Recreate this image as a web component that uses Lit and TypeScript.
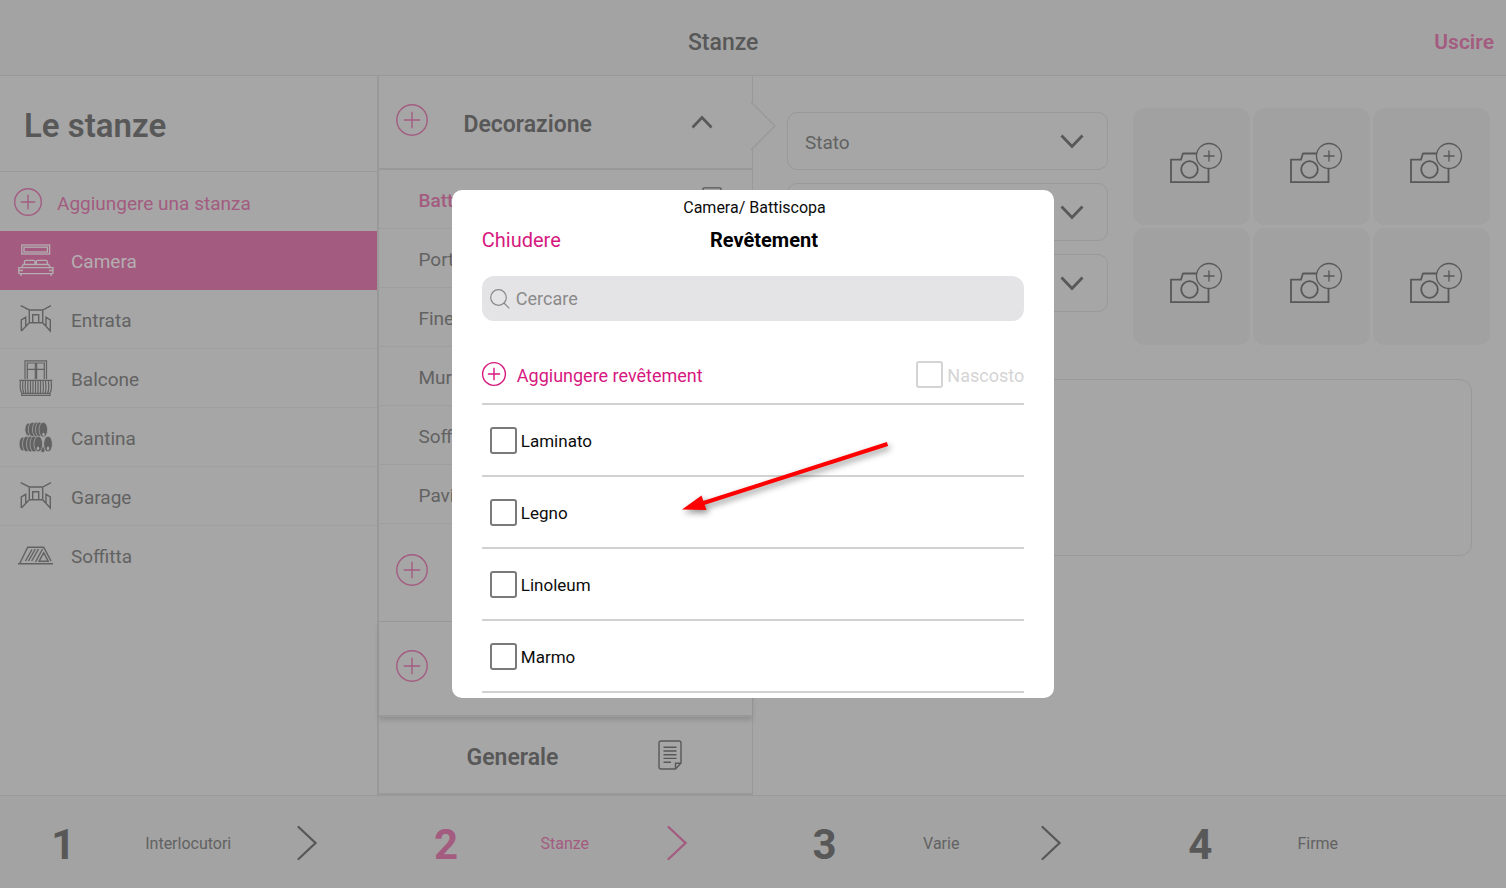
import { LitElement, html, svg, css, nothing, TemplateResult } from "lit";
import { customElement, property } from "lit/decorators.js";
import { classMap } from "lit/directives/class-map.js";

type IconName =
  | "bed" | "hall" | "balcony" | "barrels" | "attic" | "plus" | "up" | "down" | "next"
  | "note" | "camera" | "search" | "pointer" | "arrow";

const hall = svg`<path d="M2.7 4.7 11.3 9H24.7L33 4.7M11.3 9V21.7M24.7 9V21.7M3.3 30 11.3 21.7H24.7L32.3 30V19L28 16.3V25.5M3.3 30V19L7.7 16.3V25.5M14.7 21.7V13.7H20.7V21.7" />`;

const barrel = (x: number, y: number, rx: number, ry: number) =>
  svg`<ellipse class="barrel" cx=${x} cy=${y} rx=${rx} ry=${ry} />`;

const icons: Record<IconName, { w: number; h: number; sw: number; body: TemplateResult<2> }> = {
  bed: {
    w: 36, h: 36, sw: 1.3,
    body: svg`<rect x="3.8" y="3" width="27.8" height="9" /><rect x="6" y="5.2" width="23.4" height="4.8" />
      <path d="M6.500 22.500V19.500Q6.500 18.300 7.700 18.300H15.800Q17 18.300 17 19.500V22.500M18.300 22.500V19.500Q18.300 18.300 19.500 18.300H28Q29.300 18.300 29.300 19.500V22.500M0.800 31.700V25.700H5M35 31.700V25.700H31M0.800 31.700H35M3.500 25.700 5.300 22.500H30.500L32.500 25.700M0.800 28.500H5M35 28.500H31M5 25.700H31M3 31.700V34M33 31.700V34" />`,
  },
  hall: { w: 36, h: 36, sw: 1.4, body: hall },
  balcony: {
    w: 36, h: 36, sw: 1.2,
    body: svg`<path d="M7 19V.8H28.5V19M9.3 19V3H26.3V19M17.3 3V19M18.6 3V19M9.3 9.3H26.3M1.3 20.3H34.3M3.7 33.3H32V35.4H3.7ZM2.5 20.5Q1.5 29 3.7 33M33 20.5Q34.3 29 32 33M5 20.5Q4 29 5.8 33M7.5 20.5Q6.7 29 8 33M10 20.5Q9.5 29 10.3 33M12.5 20.5V33M15 20.5V33M17.5 20.5V33M20 20.5V33M22.5 20.5V33M25 20.5Q25.7 29 25 33M27.5 20.5Q28.5 29 27.3 33M30.3 20.5Q31.5 29 29.7 33" />`,
  },
  barrels: {
    w: 36, h: 36, sw: 0.8,
    body: svg`${barrel(10.5, 10.5, 3.6, 6.5)}${barrel(14.5, 10.5, 4.2, 7.3)}${barrel(18.5, 10.5, 4, 7.5)}${barrel(21.5, 10.5, 4, 7.5)}${barrel(25.3, 10.7, 4.3, 7.5)}
      ${barrel(4.8, 25, 3.7, 7)}${barrel(8.5, 25, 4, 7.8)}${barrel(12.5, 25, 4, 8)}${barrel(16, 25, 4, 8)}${barrel(24.8, 30.5, 2.5, 3)}${barrel(20.3, 25, 4.4, 7.8)}${barrel(30, 25, 4.4, 7.8)}
      <ellipse class="tap" cx="25.500" cy="15.500" rx="1.200" ry="1.700" /><ellipse class="tap" cx="20" cy="29.300" rx="1.200" ry="1.900" /><ellipse class="tap" cx="30" cy="29.300" rx="1.200" ry="1.900" />`,
  },
  attic: {
    w: 36, h: 36, sw: 1.4,
    body: svg`<path d="M0 26.700H35M1.700 26.500 9.700 10.300H25.700L33 24M7.500 24 14 12.500M10.500 24 17.300 12M13.700 24 20.500 12M17.500 25 24.500 12M21 24.300 25.700 15.700 30.300 24.300Z" />`,
  },
  plus: { w: 32, h: 32, sw: 1.4, body: svg`<circle cx="16" cy="16" r="15.200" /><path d="M16 7.800V24.200M7.800 16H24.200" />` },
  up: { w: 22, h: 14, sw: 2.6, body: svg`<path d="M1.500 12.500 11 2.500 20.500 12.500" />` },
  down: { w: 24, h: 15, sw: 2.8, body: svg`<path d="M1.500 1.500 12 12.500 22.500 1.500" />` },
  next: { w: 80, h: 36, sw: 2.3, body: svg`<path stroke-linecap="round" d="M23.500 1 40.500 17 23.500 33" />` },
  note: {
    w: 24, h: 30, sw: 1.4,
    body: svg`<path d="M1 3Q1 1 3 1H21Q23 1 23 3V23L17.500 29H3Q1 29 1 27ZM17.500 29V23.200H23M5.500 7.300H18.500M5.500 11H18.500M5.500 14.700H18.500M5.500 18.400H18.500M5.500 22.200H13" />`,
  },
  camera: {
    w: 52, h: 40, sw: 1.8,
    body: svg`<path d="M38.500 26V39.200H1V16.700H11L12.700 11Q13 10.500 13.500 10.500H27" /><circle cx="19.500" cy="26.500" r="8.300" />
      <g stroke-width="1.300"><circle cx="39" cy="13" r="12.500" /><path d="M39 7.500V18.500M33.500 13H44.500" /></g>`,
  },
  search: { w: 20, h: 20, sw: 1.2, body: svg`<circle cx="8.500" cy="8.500" r="7.800" /><path d="M14 14 19.300 19.300" />` },
  pointer: { w: 25, h: 50, sw: 1.3, body: svg`<path class="face" d="M0 1 24 25 0 49" />` },
  arrow: {
    w: 210, h: 80, sw: 4,
    body: svg`<path d="M205.500 4 20 63.500" /><path class="head" d="M0 69.500 19.500 55.500 24.500 70Z" />`,
  },
};

@customElement("room-icon")
export class RoomIcon extends LitElement {
  @property() name: IconName = "plus";
  @property({ type: Number }) size = 0;

  static styles = css`
    :host { display: inline-flex; flex: none; }
    .glyph { display: block; fill: none; stroke: currentColor; overflow: visible; }
    .barrel { fill: currentColor; stroke: #a6a6a6; }
    .tap { fill: #a6a6a6; stroke: none; }
    .face { fill: #a6a6a6; }
    .head { fill: currentColor; stroke: none; }
  `;

  render() {
    const i = icons[this.name];
    const w = this.size || i.w;
    return html`<svg class="glyph" width=${w} height=${(i.h * w) / i.w} viewBox="0 0 ${i.w} ${i.h}"
      stroke-width=${(i.sw * i.w) / w} aria-hidden="true">${i.body}</svg>`;
  }
}

const rooms: { icon: IconName; label: string; active?: boolean }[] = [
  { icon: "bed", label: "Camera", active: true },
  { icon: "hall", label: "Entrata" },
  { icon: "balcony", label: "Balcone" },
  { icon: "barrels", label: "Cantina" },
  { icon: "hall", label: "Garage" },
  { icon: "attic", label: "Soffitta" },
];
const parts = ["Battiscopa", "Porte", "Finestre", "Muro", "Soffitto", "Pavimento"];
const steps = ["Interlocutori", "Stanze", "Varie", "Firme"];
const coverings = ["Laminato", "Legno", "Linoleum", "Marmo"];

@customElement("app-root")
export class AppRoot extends LitElement {
  static styles = css`
    :host {
      --page: #a6a6a6;
      --bar: #a3a3a3;
      --ink: #585858;
      --soft: #626262;
      --line: #999999;
      --faint: #9f9f9f;
      --rose: #a35c80;
      --accent: #d6187f;
      position: relative;
      display: grid;
      grid-template-rows: 76px 1fr 93px;
      min-height: 100vh;
      background: var(--page);
      color: var(--soft);
      font: 19px/24px Roboto, "Liberation Sans", sans-serif;
    }
    *, *::before { box-sizing: border-box; }
    h1, h2, h3, p, ul { margin: 0; padding: 0; }
    ul { list-style: none; }
    button, input, select, textarea { margin: 0; padding: 0; border: 0; background: none; color: inherit; font: inherit; }
    a { color: inherit; text-decoration: none; }

    .top { display: flex; align-items: center; padding: 8px 12px 0; background: var(--bar); border-bottom: 1px solid var(--line); }
    .top-title { flex: 1; padding-top: 2px; text-align: center; font-size: 23px; font-weight: 500; color: var(--ink); }
    .exit { font-size: 21px; font-weight: 600; color: var(--rose); }

    .main { display: grid; grid-template-columns: 1fr 1fr 2fr; }
    .rooms-title { display: flex; align-items: center; height: 96px; padding: 4px 24px 0; border-bottom: 1px solid var(--line); font-size: 33px; font-weight: 600; line-height: 40px; color: var(--ink); }
    .label { padding-top: 4px; }
    .add-room { display: flex; align-items: center; gap: 15px; height: 59px; padding-left: 14px; color: var(--rose); }
    .room { display: flex; align-items: center; gap: 17px; width: 100%; height: 59px; padding-left: 18px; border-bottom: 1px solid var(--faint); text-align: left; }
    .room.active { background: var(--rose); border-color: var(--rose); color: #b4aeb1; }
    li:last-child .room { border-color: transparent; }

    .parts { display: flex; flex-direction: column; border-left: 2px solid var(--line); border-right: 1px solid var(--line); }
    .group { position: relative; display: grid; grid-template-columns: 32px 1fr 22px; align-items: center; gap: 36px; height: 94px; padding: 0 39px 0 17px; border-bottom: 2px solid var(--line); }
    .group-title { padding-top: 5px; font-size: 23px; font-weight: 600; color: var(--ink); }
    .plus { display: flex; padding-bottom: 5px; color: var(--rose); }
    .pointer { position: absolute; top: 25px; right: -24px; color: var(--line); }
    .part { display: flex; align-items: center; justify-content: space-between; width: 100%; height: 59px; padding: 0 30px 0 40px; border-bottom: 1px solid var(--faint); text-align: left; }
    .part.active { font-weight: 500; color: var(--rose); }
    .ink { color: var(--ink); }
    .closed { height: 98px; border-bottom-width: 1px; }
    .closed.last { height: 95px; border-bottom-width: 2px; box-shadow: 0 3px 5px #8f8f8f; }
    .general { display: flex; align-items: center; justify-content: space-between; flex: 1; padding: 0 70px 0 88px; border-bottom: 2px solid var(--line); color: var(--ink); }

    .detail { display: grid; grid-template-columns: 1fr 357px; align-content: start; column-gap: 25px; padding: 32px 16px 0 34px; }
    .choices { display: grid; gap: 13px; padding-top: 4px; align-content: start; }
    .choice { display: grid; align-items: center; }
    .choice > * { grid-area: 1 / 1; }
    .chevron { justify-self: end; margin-right: 24px; pointer-events: none; color: var(--ink); }
    .select { appearance: none; width: 100%; height: 58px; padding: 3px 17px 0; border: 1px solid var(--line); border-radius: 10px; }
    .photos { display: grid; grid-template-columns: repeat(3, 1fr); gap: 3px; }
    .photo { display: grid; place-items: center; aspect-ratio: 1; padding: 0 0 8px 8px; border-radius: 12px; background: #a1a1a1; color: var(--ink); }
    .notes { grid-column: 1 / -1; resize: none; height: 177px; margin: 34px 18px 0 0; padding: 16px; border: 1px solid var(--line); border-radius: 12px; }

    .steps { display: grid; grid-template-columns: repeat(4, 1fr); background: var(--bar); border-top: 1px solid var(--line); }
    .step { display: flex; align-items: center; justify-content: space-around; padding-top: 4px; font-size: 16px; }
    .step.active, .step.active .num { color: var(--rose); }
    .num { width: 80px; padding: 2px 0 0 3px; text-align: center; font-size: 42px; font-weight: 700; line-height: 48px; color: var(--ink); }
    .step-next { display: flex; width: 80px; color: var(--ink); }
    .step.active .step-next { color: var(--rose); }

    .layer { position: absolute; inset: 0; display: grid; place-items: center; }
    .dialog { position: relative; width: 40%; min-width: 480px; padding: 6px 30px 5px; border-radius: 10px; background: #fff; color: #0c0c0c; }
    .crumb { padding-left: 3px; text-align: center; font-size: 16px; }
    .dialog-head { display: grid; grid-template-columns: 1fr auto 1fr; align-items: center; padding: 8px 0 24px; }
    .close { justify-self: start; font-size: 20px; color: var(--accent); }
    .dialog-title { padding-left: 22px; font-size: 20px; font-weight: 700; color: #000; }
    .search { display: flex; align-items: center; gap: 6px; height: 45px; padding: 0 8px; border-radius: 12px; background: #e4e4e6; color: #8a8a8a; }
    .search-input { flex: 1; min-width: 0; outline: 0; font-size: 18px; }
    .search-input::placeholder { color: #8a8a8a; opacity: 1; }
    .tools { display: flex; align-items: center; justify-content: space-between; height: 84px; padding-top: 24px; border-bottom: 2px solid #d2d2d2; font-size: 18px; }
    .add { display: flex; align-items: center; gap: 11px; color: var(--accent); }
    .hidden-toggle { display: flex; align-items: center; gap: 4px; color: #d4d4d4; }
    .option { display: flex; align-items: center; gap: 4px; height: 72px; padding-left: 8px; border-bottom: 2px solid #d2d2d2; font-size: 17px; }
    .option .label { padding-top: 2px; }
    .box { appearance: none; width: 27px; height: 27px; border: 2px solid #7a7a7a; border-radius: 3px; }
    .box.muted { border-color: #d4d4d4; }
    .box:checked { background: var(--accent); }
    .arrow { position: absolute; top: 250px; left: 230px; color: #ff0000; filter: drop-shadow(2px 3px 3px #00000070); pointer-events: none; }
  `;

  render() {
    return html`
      <header class="top">
        <h1 class="top-title">Stanze</h1>
        <a class="exit" href="#">Uscire</a>
      </header>

      <main class="main">
        <nav class="rooms">
          <h2 class="rooms-title">Le stanze</h2>
          <button class="add-room"><room-icon name="plus" size="28"></room-icon><span class="label">Aggiungere una stanza</span></button>
          <ul>
            ${rooms.map((r) => html`<li><button class=${classMap({ room: true, active: !!r.active })}>
              <room-icon name=${r.icon}></room-icon><span class="label">${r.label}</span></button></li>`)}
          </ul>
        </nav>

        <section class="parts">
          <div class="group">
            <button class="plus" aria-label="Aggiungere"><room-icon name="plus"></room-icon></button>
            <h3 class="group-title">Decorazione</h3>
            <room-icon class="ink" name="up"></room-icon>
            <room-icon class="pointer" name="pointer"></room-icon>
          </div>
          <ul>
            ${parts.map((p, i) => html`<li><button class=${classMap({ part: true, active: i === 0 })}>
              <span class="label">${p}</span>${i === 0 ? html`<room-icon class="ink" name="note" size="20"></room-icon>` : nothing}</button></li>`)}
          </ul>
          <div class="group closed"><button class="plus" aria-label="Aggiungere"><room-icon name="plus"></room-icon></button></div>
          <div class="group closed last"><button class="plus" aria-label="Aggiungere"><room-icon name="plus"></room-icon></button></div>
          <div class="general"><h3 class="group-title">Generale</h3><room-icon name="note"></room-icon></div>
        </section>

        <section class="detail">
          <div class="choices">
            ${["Stato", "", ""].map((c) => html`<div class="choice">
              <select class="select" aria-label=${c || "Scelta"}><option>${c}</option></select>
              <room-icon class="chevron" name="down"></room-icon></div>`)}
          </div>
          <div class="photos">
            ${Array.from({ length: 6 }, () => html`<button class="photo" aria-label="Aggiungere una foto"><room-icon name="camera"></room-icon></button>`)}
          </div>
          <textarea class="notes" aria-label="Commento"></textarea>
        </section>
      </main>

      <footer class="steps">
        ${steps.map((s, i) => html`<a href="#" class=${classMap({ step: true, active: i === 1 })}>
          <span class="num">${i + 1}</span><span>${s}</span>
          <span class="step-next">${i < 3 ? html`<room-icon name="next"></room-icon>` : nothing}</span></a>`)}
      </footer>

      <div class="layer">
        <section class="dialog" role="dialog" aria-labelledby="dialog-title">
          <p class="crumb">Camera/ Battiscopa</p>
          <div class="dialog-head">
            <button class="close">Chiudere</button>
            <h2 class="dialog-title" id="dialog-title">Revêtement</h2>
          </div>
          <label class="search"><room-icon name="search"></room-icon>
            <input class="search-input" type="text" placeholder="Cercare" aria-label="Cercare" /></label>
          <div class="tools">
            <button class="add"><room-icon name="plus" size="24"></room-icon><span class="label">Aggiungere revêtement</span></button>
            <label class="hidden-toggle"><input class="box muted" type="checkbox" /><span class="label">Nascosto</span></label>
          </div>
          <ul>
            ${coverings.map((c) => html`<li><label class="option"><input class="box" type="checkbox" /><span class="label">${c}</span></label></li>`)}
          </ul>
          <room-icon class="arrow" name="arrow"></room-icon>
        </section>
      </div>
    `;
  }
}
